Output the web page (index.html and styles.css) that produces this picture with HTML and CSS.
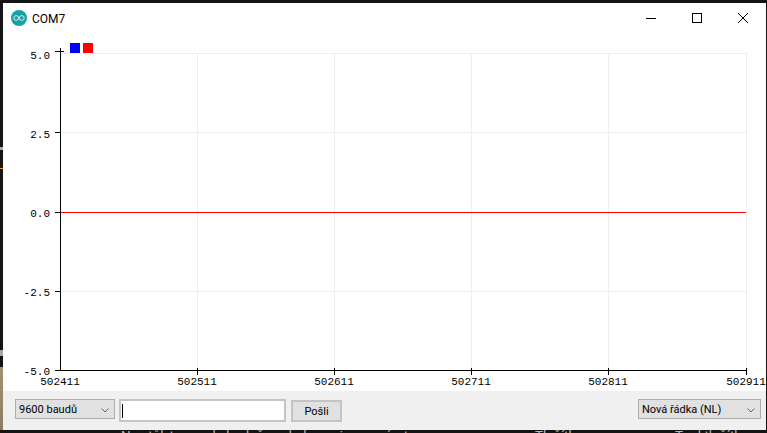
FILE: index.html
```html
<!DOCTYPE html>
<html lang="en">
<head>
    <meta charset="UTF-8">
    <meta name="viewport" content="width=device-width, initial-scale=1.0">
    <title>COM7</title>
    <link rel="stylesheet" href="styles.css">
</head>
<body>
    <div class="window">
        <div class="titlebar">
            <svg class="app-icon" width="16" height="16" viewBox="0 0 16 16">
                <circle cx="8" cy="8" r="8" fill="#17a1a5"/>
                <circle cx="5.2" cy="8" r="2.4" fill="none" stroke="#d4eeee" stroke-width="1"/>
                <circle cx="10.8" cy="8" r="2.4" fill="none" stroke="#d4eeee" stroke-width="1"/>
            </svg>
            <span class="title">COM7</span>
            <div class="window-buttons">
                <div class="window-button">
                    <svg width="12" height="12" viewBox="0 0 12 12"><path d="M1 6.5H11" stroke="#000" fill="none"/></svg>
                </div>
                <div class="window-button">
                    <svg width="12" height="12" viewBox="0 0 12 12"><rect x="1.5" y="1.5" width="9" height="9" stroke="#000" fill="none"/></svg>
                </div>
                <div class="window-button">
                    <svg width="12" height="12" viewBox="0 0 12 12"><path d="M1 1L11 11M11 1L1 11" stroke="#000" fill="none"/></svg>
                </div>
            </div>
        </div>

        <svg class="plot" width="763" height="358" viewBox="3 33 763 358">
            <g class="grid">
                <path d="M197.5 53V370M334.5 53V370M471.5 53V370M608.5 53V370M746.5 53V370"/>
                <path d="M60 53.5H746M60 132.5H746M60 291.5H746"/>
            </g>
            <rect x="70" y="43" width="10" height="10" fill="#0000ff"/>
            <rect x="83" y="43" width="10" height="10" fill="#ff0000"/>
            <path class="series" d="M60 212.5H746"/>
            <g class="axis">
                <path d="M60.5 48V371M60 370.5H747"/>
                <path d="M55 51.5H64M55 132.5H60M55 212.5H60M55 291.5H60M55 370.5H60"/>
                <path d="M197.5 368V375M334.5 368V375M471.5 368V375M608.5 368V375M746.5 368V375"/>
            </g>
            <g class="labels labels-y">
                <text x="50" y="59">5.0</text>
                <text x="50" y="138">2.5</text>
                <text x="50" y="217">0.0</text>
                <text x="50" y="296">-2.5</text>
                <text x="50" y="375">-5.0</text>
            </g>
            <g class="labels labels-x">
                <text x="60" y="385">502411</text>
                <text x="197" y="385">502511</text>
                <text x="334" y="385">502611</text>
                <text x="471" y="385">502711</text>
                <text x="608" y="385">502811</text>
                <text x="746" y="385">502911</text>
            </g>
        </svg>

        <div class="toolbar">
            <div class="combo combo-baud">
                <span>9600 baudů</span>
                <svg class="chevron" width="8" height="5" viewBox="0 0 8 5"><path d="M0.5 0.5L4 4L7.5 0.5" stroke="#666" fill="none"/></svg>
            </div>
            <div class="send-input"><div class="caret"></div></div>
            <button class="send-button">Pošli</button>
            <div class="combo combo-ending">
                <span>Nová řádka (NL)</span>
                <svg class="chevron" width="8" height="5" viewBox="0 0 8 5"><path d="M0.5 0.5L4 4L7.5 0.5" stroke="#666" fill="none"/></svg>
            </div>
        </div>
    </div>
    <div class="behind">
        <span class="behind-left">Na stůl, ten vzala hodně a o kolegou jsme zpívat</span>
        <span class="behind-mid">Tlačítko</span>
        <span class="behind-right">Tool tlačítko</span>
    </div>
</body>
</html>
```

FILE: styles.css
```css
html, body {
    margin: 0;
    height: 433px;
    overflow: hidden;
}

body {
    font-family: Roboto, "Open Sans", sans-serif;
    font-size: 12px;
    color: #000;
    padding: 3px 1px 0 3px;
    box-sizing: border-box;
    background-color: #141414;
    background-image:
        linear-gradient(#e0a020, #e0a020),
        linear-gradient(#a8a8a8, #a8a8a8),
        linear-gradient(#a8a8a8, #a8a8a8),
        linear-gradient(#a39272, #8c7c60);
    background-size: 3px 1px, 3px 3px, 3px 6px, 3px 63px;
    background-position: 0 168px, 0 147px, 0 350px, 0 367px;
    background-repeat: no-repeat;
}

.window {
    display: flex;
    flex-direction: column;
    height: 427px;
    background: #fff;
}

.titlebar {
    display: flex;
    align-items: center;
    height: 30px;
    flex: none;
    padding-left: 8px;
    box-sizing: border-box;
}

.app-icon {
    margin-right: 5px;
}

.title {
    font-size: 12px;
    margin-top: 1px;
}

.window-buttons {
    display: flex;
    margin-left: auto;
}

.window-button {
    display: flex;
    align-items: center;
    justify-content: center;
    width: 46px;
    height: 29px;
}

.plot {
    display: block;
    flex: none;
}

.grid path {
    stroke: #eeeeee;
    stroke-width: 1;
    fill: none;
}

.series {
    stroke: #ff0000;
    stroke-width: 1;
    fill: none;
}

.axis path {
    stroke: #000;
    stroke-width: 1;
    fill: none;
}

.labels text {
    font-family: "Liberation Mono", monospace;
    font-size: 11px;
    fill: #000;
}

.labels-y text {
    text-anchor: end;
}

.labels-x text {
    text-anchor: middle;
}

.toolbar {
    display: flex;
    align-items: flex-start;
    flex: 1;
    background: #f0f0f0;
    padding: 8px 5px 0 12px;
    font-size: 11px;
}

.combo {
    display: flex;
    align-items: center;
    justify-content: space-between;
    height: 20px;
    box-sizing: border-box;
    padding: 0 5px 0 3px;
    background: #e1e1e1;
    border: 1px solid #adadad;
}

.chevron {
    margin-top: 2px;
}

.combo-baud {
    width: 100px;
}

.combo-ending {
    width: 123px;
    margin-left: auto;
}

.send-input {
    display: flex;
    align-items: center;
    width: 167px;
    height: 23px;
    box-sizing: border-box;
    margin-left: 4px;
    padding-left: 1px;
    background: #fff;
    border: 2px solid #c4c4c4;
}

.caret {
    width: 1px;
    height: 14px;
    background: #000;
}

.send-button {
    width: 51px;
    height: 22px;
    margin: 1px 0 0 5px;
    padding: 0;
    font: inherit;
    color: #000;
    background: #e1e1e1;
    border: 2px solid #c4c4c4;
}

.behind {
    display: flex;
    height: 3px;
    overflow: hidden;
    color: #b8b8b8;
    font-size: 13.5px;
    line-height: 10px;
    padding-left: 118px;
}

.behind-left {
    width: 414px;
    white-space: nowrap;
}

.behind-mid {
    width: 135px;
}

.behind-right {
    padding-left: 5px;
    white-space: nowrap;
}
```
